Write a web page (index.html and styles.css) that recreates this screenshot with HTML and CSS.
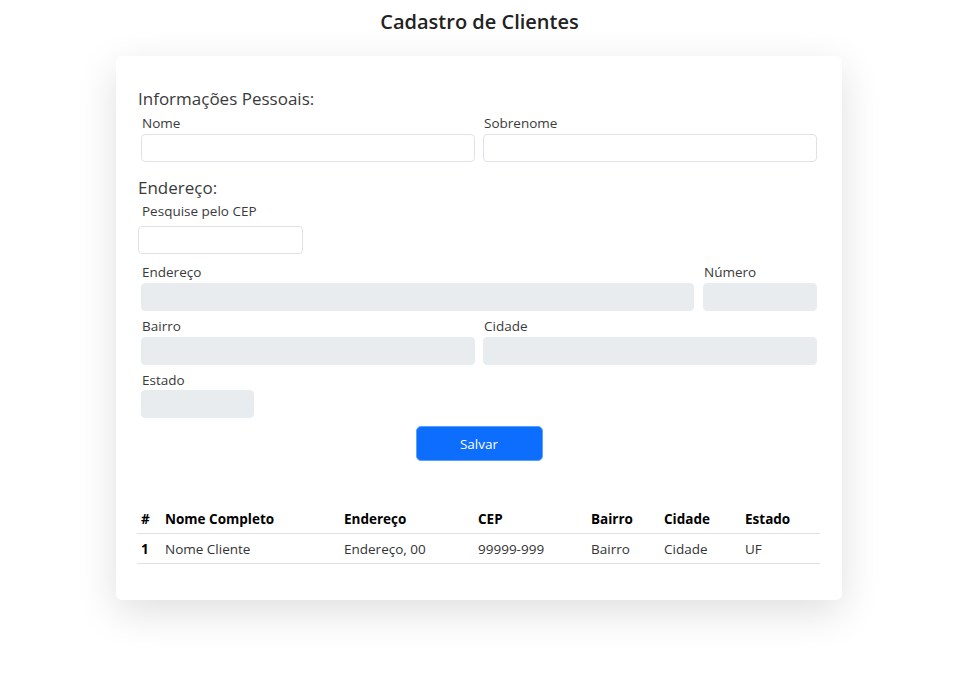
FILE: index.html
```html
<!DOCTYPE html>
<html lang="pt-BR">
<head>
<meta charset="utf-8">
<title>Cadastro de Clientes</title>
<link rel="stylesheet" href="styles.css">
</head>
<body>
<h1 class="title">Cadastro de Clientes</h1>
<div class="card">
  <h2 class="section">Informações Pessoais:</h2>
  <div class="row two">
    <div class="field"><label>Nome</label><input class="input" type="text"></div>
    <div class="field"><label>Sobrenome</label><input class="input" type="text"></div>
  </div>
  <h2 class="section section-addr">Endereço:</h2>
  <div class="cep">
    <label>Pesquise pelo CEP</label>
    <input class="input cep-input" type="text">
  </div>
  <div class="row addr">
    <div class="field"><label>Endereço</label><input class="input" type="text" disabled></div>
    <div class="field"><label>Número</label><input class="input" type="text" disabled></div>
  </div>
  <div class="row two row-b">
    <div class="field"><label>Bairro</label><input class="input" type="text" disabled></div>
    <div class="field"><label>Cidade</label><input class="input" type="text" disabled></div>
  </div>
  <div class="row uf">
    <div class="field"><label>Estado</label><input class="input" type="text" disabled></div>
  </div>
  <div class="actions"><button class="btn" type="button">Salvar</button></div>
  <table class="table">
    <colgroup>
      <col class="c-id"><col class="c-nome"><col class="c-end"><col class="c-cep"><col class="c-bairro"><col class="c-cidade"><col class="c-uf">
    </colgroup>
    <thead>
      <tr><th>#</th><th>Nome Completo</th><th>Endereço</th><th>CEP</th><th>Bairro</th><th>Cidade</th><th>Estado</th></tr>
    </thead>
    <tbody>
      <tr><th>1</th><td>Nome Cliente</td><td>Endereço, 00</td><td>99999-999</td><td>Bairro</td><td>Cidade</td><td>UF</td></tr>
    </tbody>
  </table>
</div>
</body>
</html>
```
FILE: styles.css
```css
* { box-sizing: border-box; }
body {
  margin: 0;
  background: #fff;
  font-family: "Open Sans", "Noto Sans", sans-serif;
  color: #333;
}
.title {
  margin: 8px 0 0;
  text-align: center;
  font-size: 20px;
  line-height: 27px;
  font-weight: 600;
  color: #222;
}
.card {
  width: 726px;
  margin: 21px 0 80px 116px;
  background: #fff;
  border-radius: 6px;
  box-shadow: 0 12px 40px rgba(0,0,0,0.13);
  padding: 33px 22px 36px;
}
.section {
  margin: 0;
  font-size: 17px;
  line-height: 20px;
  font-weight: 400;
  color: #3a3a3a;
}
.section-addr { margin-top: 16px; }
.row {
  display: grid;
  gap: 0;
  margin-top: 5px;
}
.row.two { grid-template-columns: 1fr 1fr; }
.row.addr { grid-template-columns: 1fr 122px; margin-top: 9px; }
.row.row-b { margin-top: 6px; }
.row.uf { grid-template-columns: 120px; margin-top: 6px; }
.row.uf .input { margin-top: 1px; }
.field { padding: 0 4px 0 3px; display: flex; flex-direction: column; }
.row.addr .field:last-child { padding: 0 3px 0 5px; }
.row.two .field:last-child { padding: 0 3px 0 4px; }
label {
  font-size: 13.5px;
  line-height: 18px;
  color: #3a3a3a;
  padding-left: 1px;
}
.input {
  display: block;
  width: 100%;
  height: 28px;
  margin-top: 2px;
  border: 1px solid #dee2e6;
  border-radius: 4px;
  background: #fff;
  font: inherit;
}
.input:disabled { background: #e9ecef; border-color: #e9ecef; }
.cep { margin-top: 4px; display: flex; flex-direction: column; align-items: flex-start; }
.cep label { padding-left: 4px; }
.cep-input { width: 165px; margin-top: 6px; }
.actions { display: flex; justify-content: center; margin-top: 8px; }
.btn {
  width: 127px;
  height: 35px;
  border: 1px solid #5aa0ff;
  border-radius: 5px;
  background: #0d6efd;
  color: #fff;
  font-family: inherit;
  font-size: 13.5px;
}
.table {
  width: 683px;
  margin-top: 44px;
  margin-left: -1px;
  border-collapse: collapse;
  table-layout: fixed;
  font-size: 13.5px;
}
.c-id { width: 24px; }
.c-nome { width: 179px; }
.c-end { width: 134px; }
.c-cep { width: 113px; }
.c-bairro { width: 73px; }
.c-cidade { width: 81px; }
.c-uf { width: 79px; }
.table th, .table td {
  text-align: left;
  padding: 0 0 0 4px;
  height: 28px;
  border-bottom: 1px solid #dee2e6;
  white-space: nowrap;
}
.table thead th { font-weight: 700; color: #000; }
.table tbody th { font-weight: 700; color: #000; height: 30px; padding-top: 2px; }
.table tbody td { color: #333; height: 30px; padding-top: 2px; }
```
